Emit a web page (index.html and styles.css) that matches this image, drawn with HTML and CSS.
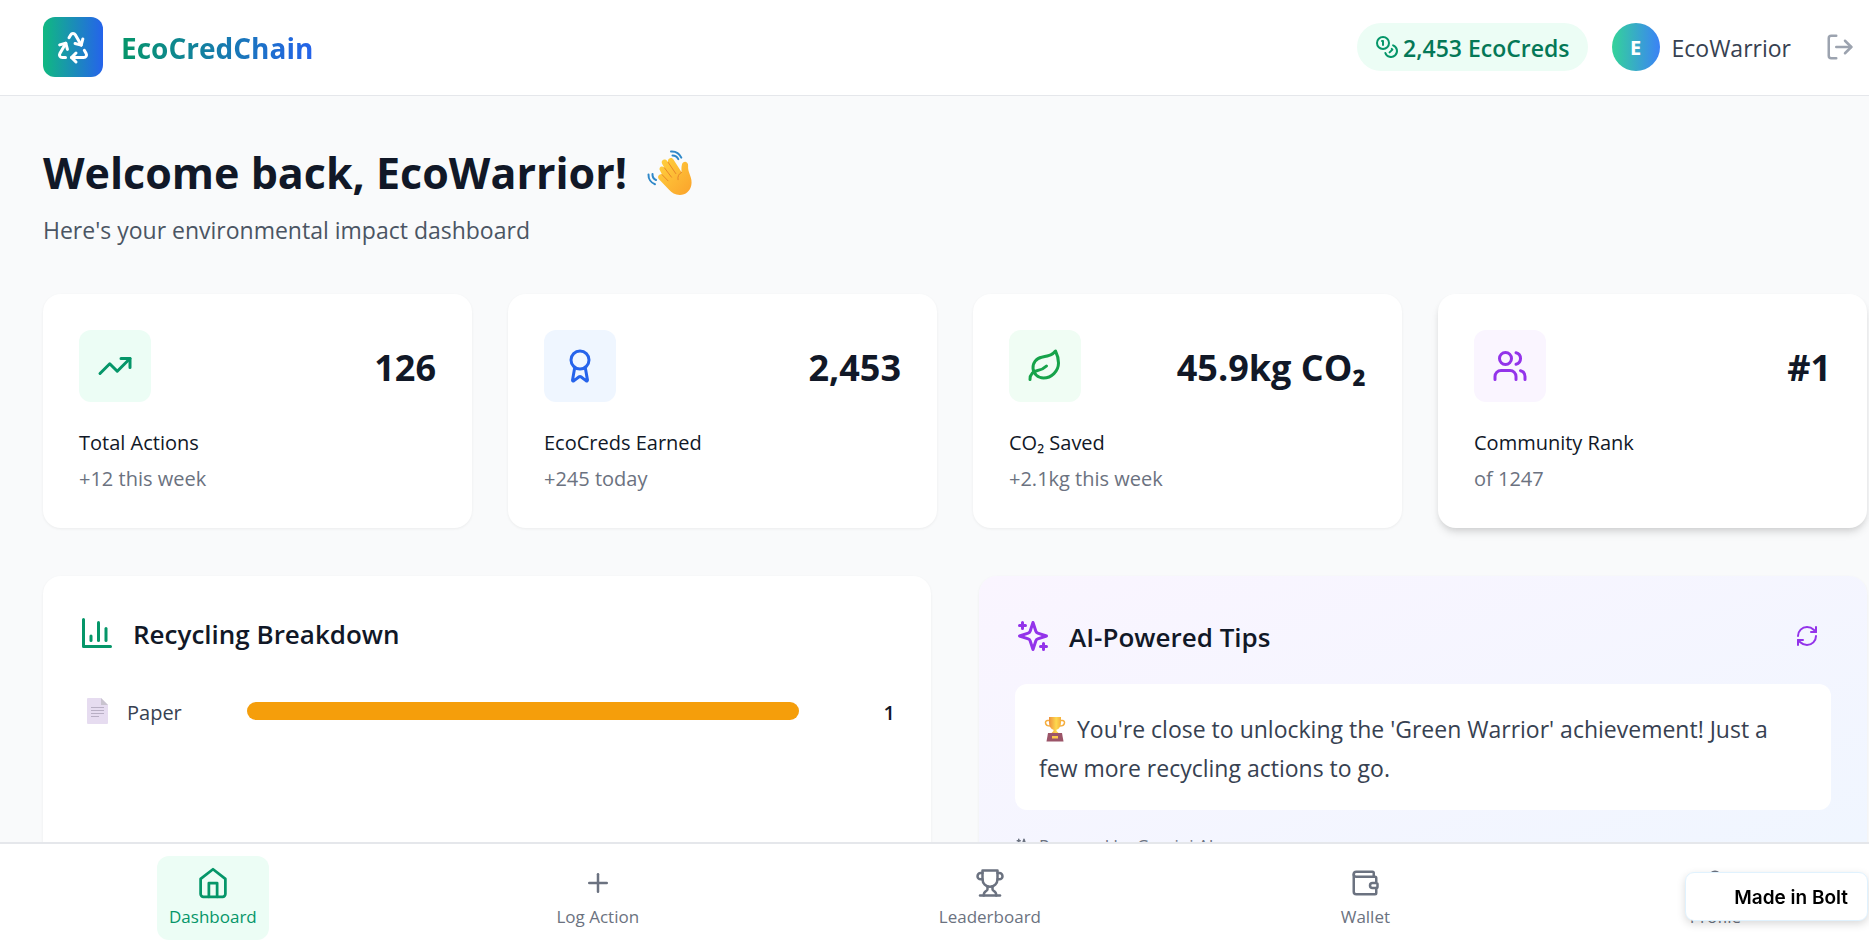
FILE: index.html
```html
<!DOCTYPE html>
<html lang="en">
<head>
    <meta charset="UTF-8">
    <meta name="viewport" content="width=device-width, initial-scale=1">
    <title>EcoCredChain</title>
    <link rel="stylesheet" href="styles.css">
</head>
<body>
<header class="header">
    <a href="#" class="brand">
        <span class="brand-logo">
            <svg class="icon icon-lg" viewBox="0 0 24 24"><path d="M7 19H4.815a1.83 1.83 0 0 1-1.57-.881 1.785 1.785 0 0 1-.004-1.784L7.196 9.5"/><path d="M11 19h8.203a1.83 1.83 0 0 0 1.556-.89 1.784 1.784 0 0 0 0-1.775l-1.226-2.12"/><path d="m14 16-3 3 3 3"/><path d="M8.293 13.596 7.196 9.5 3.1 10.598"/><path d="m9.344 5.811 1.093-1.892A1.83 1.83 0 0 1 11.985 3a1.784 1.784 0 0 1 1.546.888l3.943 6.843"/><path d="m13.378 9.633 4.096 1.098 1.097-4.096"/></svg>
        </span>
        <span class="brand-name">EcoCredChain</span>
    </a>
    <div class="account">
        <span class="creds">
            <svg class="icon icon-sm" viewBox="0 0 24 24"><circle cx="8" cy="8" r="6"/><path d="M18.09 10.37A6 6 0 1 1 10.34 18"/><path d="M7 6h1v4"/><path d="m16.71 13.88.7.71-2.82 2.82"/></svg>
            <span class="creds-text">2,453 EcoCreds</span>
        </span>
        <div class="user">
            <span class="avatar">E</span>
            <span class="user-name">EcoWarrior</span>
        </div>
        <button type="button" class="logout" aria-label="Log out">
            <svg class="icon" viewBox="0 0 24 24"><path d="M9 21H5a2 2 0 0 1-2-2V5a2 2 0 0 1 2-2h4"/><path d="m16 17 5-5-5-5"/><path d="M21 12H9"/></svg>
        </button>
    </div>
</header>

<main class="main">
    <div class="welcome">
        <h1>Welcome back, EcoWarrior!
            <svg class="wave" viewBox="0 0 48 48">
                <defs>
                    <linearGradient id="skin" x1="0" y1="0" x2="1" y2="1">
                        <stop offset="0" stop-color="#ffd23e"/>
                        <stop offset="1" stop-color="#fba22b"/>
                    </linearGradient>
                </defs>
                <path fill="url(#skin)" d="M13 21.5c-1.3-1.8.2-4.2 2.3-3.9.9.1 1.6.6 2.2 1.3l-2.3-4c-1.200-2.200.1-4.100 1.900-4.400 1.300-.2 2.500.4 3.200 1.500l.9 1.400c-.7-1.900.1-3.700 1.800-4.200 1.400-.4 2.800.2 3.600 1.500l8 12.600c-.2-2.800-.3-5.500.3-7.600.6-2.200 2.300-3.200 4-2.700 1.600.5 2.300 2 2.200 3.700-.2 3.300.4 5.300 1.700 8.700 1.600 4.200 2.200 7.200 1.500 10.800-1.100 5.800-5.600 9.700-11.500 9.700-4.700 0-8-2-11-5.300L12 30.200c-1.300-1.500-1.200-3.300 0-4.300.9-.7 2-.8 3-.3z"/>
                <path class="wave-crease" d="m17.5 18.900 7 9.300M21.200 13.400l7.600 11.200M15 25.600l6 6.200M34.600 23.300c-2.900 1.500-4.200 4.200-3.600 7.400"/>
                <path class="wave-motion" d="M24 2.500c4.500-.3 8.500 2.200 10.300 6.200M25.500 6.500c2.600 0 4.700 1.400 5.800 3.600M1.500 25.500c-.2 4.500 2.600 8.400 6.500 9.700M5.500 25c-.2 2.600 1.200 4.900 3.500 6"/>
            </svg>
        </h1>
        <p>Here's your environmental impact dashboard</p>
    </div>

    <section class="stats">
        <article class="card stat">
            <div class="stat-top">
                <span class="stat-icon emerald"><svg class="icon icon-lg" viewBox="0 0 24 24"><path d="m22 7-8.5 8.5-5-5L2 17"/><path d="M16 7h6v6"/></svg></span>
                <span class="stat-value">126</span>
            </div>
            <h3>Total Actions</h3>
            <p>+12 this week</p>
        </article>
        <article class="card stat">
            <div class="stat-top">
                <span class="stat-icon blue"><svg class="icon icon-lg" viewBox="0 0 24 24"><path d="m15.477 12.89 1.515 8.526a.5.5 0 0 1-.81.47l-3.58-2.687a1 1 0 0 0-1.197 0l-3.586 2.686a.5.5 0 0 1-.81-.469l1.514-8.526"/><circle cx="12" cy="8" r="6"/></svg></span>
                <span class="stat-value">2,453</span>
            </div>
            <h3>EcoCreds Earned</h3>
            <p>+245 today</p>
        </article>
        <article class="card stat">
            <div class="stat-top">
                <span class="stat-icon green"><svg class="icon icon-lg" viewBox="0 0 24 24"><path d="M11 20A7 7 0 0 1 9.8 6.1C15.5 5 17 4.48 19 2c1 2 2 4.18 2 8 0 5.5-4.78 10-10 10Z"/><path d="M2 21c0-3 1.85-5.36 5.08-6C9.5 14.52 12 13 13 12"/></svg></span>
                <span class="stat-value">45.9kg CO₂</span>
            </div>
            <h3>CO₂ Saved</h3>
            <p>+2.1kg this week</p>
        </article>
        <article class="card stat raised">
            <div class="stat-top">
                <span class="stat-icon purple"><svg class="icon icon-lg" viewBox="0 0 24 24"><path d="M16 21v-2a4 4 0 0 0-4-4H6a4 4 0 0 0-4 4v2"/><circle cx="9" cy="7" r="4"/><path d="M22 21v-2a4 4 0 0 0-3-3.87"/><path d="M16 3.13a4 4 0 0 1 0 7.75"/></svg></span>
                <span class="stat-value">#1</span>
            </div>
            <h3>Community Rank</h3>
            <p>of 1247</p>
        </article>
    </section>

    <section class="panels">
        <article class="card panel">
            <div class="panel-title">
                <svg class="icon icon-lg green-icon" viewBox="0 0 24 24"><path d="M3 3v18h18"/><path d="M18 17V9"/><path d="M13 17V5"/><path d="M8 17v-3"/></svg>
                <h2>Recycling Breakdown</h2>
            </div>
            <div class="breakdown-row">
                <svg class="paper" viewBox="0 0 36 42">
                    <path fill="#e6dcf0" d="M9 8h13l7 7v18a1 1 0 0 1-1 1H9a1 1 0 0 1-1-1V9a1 1 0 0 1 1-1z"/>
                    <path fill="#c9c4cf" d="M22 8l7 7h-7z"/>
                    <path stroke="#b8afc4" d="M12 17.5h13M12 20.5h13M12 23.5h13M12 26.5h8"/>
                </svg>
                <span class="breakdown-label">Paper</span>
                <div class="bar"><div class="bar-fill" style="width: 100%"></div></div>
                <span class="breakdown-value">1</span>
            </div>
        </article>

        <article class="card panel tips">
            <div class="tips-head">
                <div class="panel-title">
                    <svg class="icon icon-lg" viewBox="0 0 24 24"><path d="m12 3-1.912 5.813a2 2 0 0 1-1.275 1.275L3 12l5.813 1.912a2 2 0 0 1 1.275 1.275L12 21l1.912-5.813a2 2 0 0 1 1.275-1.275L21 12l-5.813-1.912a2 2 0 0 1-1.275-1.275L12 3Z"/><path d="M5 3v4M19 17v4M3 5h4M17 19h4"/></svg>
                    <h2>AI-Powered Tips</h2>
                </div>
                <button type="button" class="refresh" aria-label="Refresh tips">
                    <svg class="icon icon-sm" viewBox="0 0 24 24"><path d="M3 12a9 9 0 0 1 9-9 9.75 9.75 0 0 1 6.74 2.74L21 8"/><path d="M21 3v5h-5"/><path d="M21 12a9 9 0 0 1-9 9 9.75 9.75 0 0 1-6.74-2.74L3 16"/><path d="M8 16H3v5"/></svg>
                </button>
            </div>
            <p class="tip">
                <svg class="cup" viewBox="0 0 32 26">
                    <defs>
                        <linearGradient id="gold" x1="0" y1="0" x2="1" y2="0">
                            <stop offset="0" stop-color="#ee8f3c"/>
                            <stop offset=".6" stop-color="#fdd94f"/>
                            <stop offset="1" stop-color="#f6b03c"/>
                        </linearGradient>
                    </defs>
                    <path fill="none" stroke="#f5ae3e" stroke-width="1.5" d="M11 4.5H8.5a2 2 0 0 0-2 2.3c.3 2.3 2.2 3.2 5 3.2M21 4.5h2.5a2 2 0 0 1 2 2.3c-.3 2.3-2.2 3.2-5 3.2"/>
                    <path fill="url(#gold)" d="M10 1h12v5.5c0 4-2 6.5-4.5 7.3V15l2.5 2.5h-8l2.5-2.5v-1.2C12 13 10 10.5 10 6.5z"/>
                    <path fill="#9b5468" d="M9 17h14l1.500 8.500h-17z"/>
                    <path fill="#fcc84a" d="M13 20h6v2.500h-6z"/>
                </svg>
                You're close to unlocking the 'Green Warrior' achievement! Just a few more recycling actions to go.
            </p>
            <p class="powered">
                <svg class="icon icon-xs" viewBox="0 0 24 24"><path d="m12 3-1.912 5.813a2 2 0 0 1-1.275 1.275L3 12l5.813 1.912a2 2 0 0 1 1.275 1.275L12 21l1.912-5.813a2 2 0 0 1 1.275-1.275L21 12l-5.813-1.912a2 2 0 0 1-1.275-1.275L12 3Z"/><path d="M5 3v4M19 17v4M3 5h4M17 19h4"/></svg>
                Powered by Gemini AI
            </p>
        </article>
    </section>
</main>

<nav class="nav">
    <a href="#" class="nav-item active">
        <svg class="icon" viewBox="0 0 24 24"><path d="m3 9 9-7 9 7v11a2 2 0 0 1-2 2H5a2 2 0 0 1-2-2z"/><path d="M9 22V12h6v10"/></svg>
        Dashboard
    </a>
    <a href="#" class="nav-item">
        <svg class="icon" viewBox="0 0 24 24"><path d="M5 12h14"/><path d="M12 5v14"/></svg>
        Log Action
    </a>
    <a href="#" class="nav-item">
        <svg class="icon" viewBox="0 0 24 24"><path d="M6 9H4.500a2.500 2.500 0 0 1 0-5H6"/><path d="M18 9h1.500a2.500 2.500 0 0 0 0-5H18"/><path d="M4 22h16"/><path d="M10 14.66V17c0 .55-.47.98-.97 1.21C7.85 18.75 7 20.24 7 22"/><path d="M14 14.66V17c0 .55.47.98.97 1.21C16.15 18.75 17 20.24 17 22"/><path d="M18 2H6v7a6 6 0 0 0 12 0V2Z"/></svg>
        Leaderboard
    </a>
    <a href="#" class="nav-item">
        <svg class="icon" viewBox="0 0 24 24"><path d="M19 7V4a1 1 0 0 0-1-1H5a2 2 0 0 0 0 4h15a1 1 0 0 1 1 1v4h-3a2 2 0 0 0 0 4h3a1 1 0 0 0 1-1v-2a1 1 0 0 0-1-1"/><path d="M3 5v14a2 2 0 0 0 2 2h15a1 1 0 0 0 1-1v-4"/></svg>
        Wallet
    </a>
    <a href="#" class="nav-item">
        <svg class="icon" viewBox="0 0 24 24"><path d="M19 21v-2a4 4 0 0 0-4-4H9a4 4 0 0 0-4 4v2"/><circle cx="12" cy="7" r="4"/></svg>
        Profile
    </a>
</nav>

<a href="#" class="bolt-badge">Made in Bolt</a>
</body>
</html>
```

FILE: styles.css
```css
*{
    box-sizing: border-box;
    margin: 0;
    padding: 0;
}
body{
    background: #f9fafb;
    color: #111827;
    font: 23px/36px "Open Sans", "Noto Sans", sans-serif;
}
a{
    color: inherit;
    text-decoration: none;
}
button{
    border: 0;
    background: none;
    cursor: pointer;
}
.icon{
    display: block;
    flex: none;
    width: 30px;
    height: 30px;
    fill: none;
    stroke: currentColor;
    stroke-width: 2;
    stroke-linecap: round;
    stroke-linejoin: round;
}
.icon-lg{
    width: 36px;
    height: 36px;
}
.icon-sm{
    width: 24px;
    height: 24px;
}
.icon-xs{
    width: 18px;
    height: 18px;
}

/* header */
.header{
    display: flex;
    align-items: center;
    justify-content: space-between;
    height: 96px;
    padding: 0 2px 2px 43px;
    background: #fff;
    border-bottom: 1px solid #e5e7eb;
}
.brand{
    display: flex;
    align-items: center;
    gap: 18px;
}
.brand-logo{
    display: flex;
    align-items: center;
    justify-content: center;
    width: 60px;
    height: 60px;
    border-radius: 12px;
    background: linear-gradient(to right, #10b981, #2563eb);
    color: #fff;
}
.brand-name{
    padding-top: 2px;
    font-size: 28px;
    font-weight: 700;
    background: linear-gradient(to right, #059669, #2563eb);
    -webkit-background-clip: text;
    background-clip: text;
    color: transparent;
}
.account{
    display: flex;
    align-items: center;
    gap: 24px;
}
.creds{
    display: flex;
    align-items: center;
    gap: 4px;
    height: 48px;
    padding: 0 18px;
    border-radius: 24px;
    background: #ecfdf5;
    color: #047857;
    font-weight: 600;
}
.creds .icon{
    color: #059669;
}
.creds-text,
.user-name{
    padding-top: 2px;
}
.user{
    display: flex;
    align-items: center;
    gap: 12px;
    margin-right: -2px;
    color: #374151;
}
.avatar{
    width: 48px;
    height: 48px;
    border-radius: 50%;
    background: linear-gradient(to right, #34d399, #3b82f6);
    color: #fff;
    font-size: 20px;
    font-weight: 700;
    line-height: 50px;
    text-align: center;
}
.logout{
    padding: 12px;
    color: #9ca3af;
}

/* dashboard */
.main{
    padding: 50px 2px 48px 43px;
}
.welcome{
    margin-bottom: 46px;
    color: #4b5563;
}
.welcome h1{
    display: flex;
    align-items: center;
    gap: 20px;
    margin-bottom: 12px;
    color: #111827;
    font-size: 43px;
    line-height: 54px;
}
.wave{
    width: 48px;
    height: 48px;
}
.wave-crease{
    fill: none;
    stroke: #e8872a;
    stroke-width: 1;
    stroke-linecap: round;
}
.wave-motion{
    fill: none;
    stroke: #2f88c9;
    stroke-width: 2;
    stroke-linecap: round;
}
.card{
    padding: 36px;
    border-radius: 18px;
    background: #fff;
    box-shadow: 0 1px 3px rgba(0,0,0,0.06);
}
.stats{
    display: grid;
    grid-template-columns: repeat(4, 1fr);
    gap: 36px;
    margin-bottom: 48px;
}
.stat{
    padding-bottom: 34px;
}
.stat.raised{
    box-shadow: 0 6px 9px -1px rgba(0,0,0,0.1), 0 3px 6px -2px rgba(0,0,0,0.1);
}
.stat-top{
    display: flex;
    align-items: center;
    justify-content: space-between;
    margin-bottom: 26px;
}
.stat-icon{
    padding: 18px;
    border-radius: 12px;
}
.emerald{
    background: #ecfdf5;
    color: #059669;
}
.blue{
    background: #eff6ff;
    color: #2563eb;
}
.green{
    background: #f0fdf4;
    color: #16a34a;
}
.purple{
    background: #faf5ff;
    color: #9333ea;
}
.stat-value{
    padding-top: 4px;
    font-size: 36px;
    font-weight: 700;
    line-height: 48px;
}
.stat h3{
    margin-bottom: 6px;
    font-size: 20px;
    font-weight: 400;
    line-height: 30px;
}
.stat p{
    color: #6b7280;
    font-size: 20px;
    line-height: 30px;
}

/* lower panels */
.panels{
    display: grid;
    grid-template-columns: 1fr 1fr;
    gap: 48px;
}
.panel-title{
    display: flex;
    align-items: center;
    gap: 18px;
}
.panel-title h2{
    padding-top: 2px;
    font-size: 26px;
    font-weight: 600;
    line-height: 40px;
}
.green-icon{
    color: #059669;
}
.breakdown-row{
    display: grid;
    grid-template-columns: 36px 108px 1fr 84px;
    align-items: center;
    gap: 12px;
    margin-top: 36px;
    font-size: 20px;
}
.paper{
    width: 36px;
    height: 42px;
}
.breakdown-label,
.breakdown-value{
    padding-top: 4px;
}
.breakdown-label{
    color: #374151;
}
.bar{
    height: 18px;
    border-radius: 9px;
    background: #f3f4f6;
}
.bar-fill{
    height: 100%;
    border-radius: 9px;
    background: #f59e0b;
}
.breakdown-value{
    font-weight: 600;
    text-align: right;
}
.tips{
    background: linear-gradient(to bottom right, #faf5ff, #eff6ff);
}
.tips-head{
    display: flex;
    align-items: center;
    justify-content: space-between;
    margin-bottom: 24px;
}
.tips-head .icon{
    color: #9333ea;
}
.refresh{
    padding: 12px;
}
.tip{
    padding: 26px 24px 22px;
    border-radius: 12px;
    background: #fff;
    color: #374151;
    line-height: 39px;
}
.cup{
    width: 32px;
    height: 26px;
    vertical-align: -4px;
}
.powered{
    display: flex;
    align-items: center;
    gap: 6px;
    margin-top: 24px;
    color: #6b7280;
    font-size: 17px;
    line-height: 24px;
}

/* bottom navigation */
.nav{
    position: fixed;
    right: 0;
    bottom: 0;
    left: 0;
    display: flex;
    justify-content: space-between;
    padding: 12px 116px 11px 157px;
    background: #fff;
    border-top: 2px solid #e5e7eb;
    color: #6b7280;
    font-size: 17px;
    line-height: 24px;
}
.nav-item{
    display: flex;
    flex-direction: column;
    align-items: center;
    gap: 7px;
    padding: 12px 12px 11px;
    border-radius: 12px;
}
.nav-item.active{
    background: #ecfdf5;
    color: #059669;
}
.nav-item.active .icon{
    transform: scale(1.1);
}
.bolt-badge{
    position: fixed;
    right: 1px;
    bottom: 30px;
    padding: 11px 19px 9px 48px;
    border: 1px solid #e0f2fe;
    border-radius: 9px;
    background: #fff;
    box-shadow: 0 3px 8px rgba(0,0,0,0.15);
    color: #000;
    font: 600 19px/27px Inter, sans-serif;
}
```
